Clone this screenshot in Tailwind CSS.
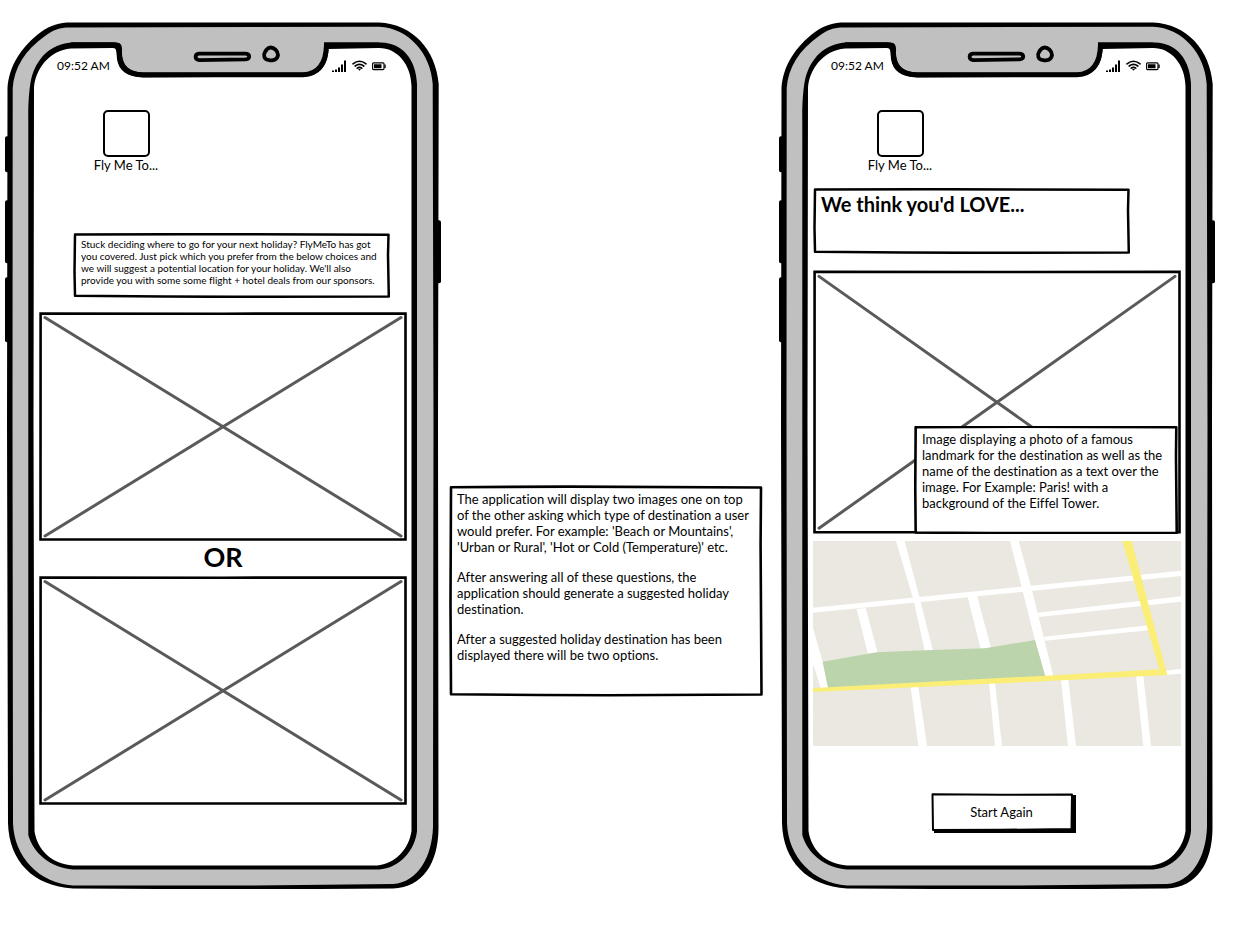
<!DOCTYPE html>
<html lang="en">
<head>
<meta charset="utf-8">
<meta name="viewport" content="width=device-width, initial-scale=1">
<title>Fly Me To... wireframe</title>
<script src="https://cdn.jsdelivr.net/npm/@tailwindcss/browser@4"></script>
</head>
<body class="bg-white text-black font-['Lato','Open_Sans',sans-serif] text-[13px] leading-[16px] [font-variant-ligatures:none]">

<!-- Shared drawings -->
<svg class="hidden" aria-hidden="true">
  <symbol id="phone" viewBox="0 0 436 866" preserveAspectRatio="none">
    <rect x="0" y="114" width="6" height="36" rx="2"/>
    <rect x="0" y="178" width="6" height="63" rx="2"/>
    <rect x="0" y="255" width="6" height="65" rx="2"/>
    <rect x="430" y="198" width="6" height="63" rx="2"/>
    <path d="M66 .5H374C408 2 431 28 433.700 62L433 400L433.500 806C433 840 418 864 388 865.500L240 866.500L68 865.500C28 863 4 838 3 800L2 400L2.500 66C4 44 16 25 36 10C46 3 54 .5 66 .5Z"/>
    <path fill="#c0c0c0" d="M62 5.500L374 4.700C404 6 426 32 427.700 62L428.500 400L428 804C427 834 413 859 388 861L240 862.500H68C34 860 9 834 8 800L7.500 400L7.700 66C9 46 20 28 40 14C48 8 54 6 62 5.500Z"/>
    <path d="M66 20.500H111C118 20.500 117 26 117 32C118 44 124 50 138 50.500H300C313 50 319 41 319 27V20.500H376C398 21 411 38 412 62V808C410 828 394 845 374 846.500H68C46 845 28 830 23.300 812V100C23 84 24 68 26 58C31 36 46 22 66 20.500Z"/>
    <path fill="#c0c0c0" d="M116 18H319V27C318 40 312 50 300 50.500H138C126 50 118 42 117.500 32C117 24 118 21 113 20.500z"/>
    <path fill="#fff" d="M66 26.500L108 26C112 26 111.500 30 112 37C114 49 122 55 138 55.500L300 54.500C316 53 323 42 323.500 27L374 26C392 26 406 42 406.500 64V808C404 826 390 841 372 842.500H68C46 841 32 826 29.500 808L28.500 400L29 66C30 48 44 28 66 26.500Z"/>
    <path fill="none" stroke="#000" stroke-width="5" stroke-linejoin="miter" d="M66 22.700H108C115 22.500 114 27 114.500 35C116 47 124 52.500 138 52.800H298C313 52 321 42 321.500 23H374"/>
    <path fill="none" stroke="#000" stroke-width="3.800" stroke-linejoin="round" d="M194 31.500H240C245.500 31.500 245.500 37 240.500 37.300L194 38C189.500 37.500 189.500 32 194 31.500Z"/>
    <path fill="none" stroke="#000" stroke-width="3.800" d="M265 25.500C269 25 273 29 273 33C272 38 268 39 264 38C259 38 258 33 260 30C261 28 262 26 265 25.500Z"/>
  </symbol>
  <symbol id="box" viewBox="0 0 316 66" preserveAspectRatio="none">
    <path fill="#fff" stroke="#000" stroke-width="2.500" stroke-linejoin="round" vector-effect="non-scaling-stroke" d="M2 1.500L120 1.200L314.500 1.800L314 22L314.800 64.500L160 64.800L90 64.600L2 63.800L1.500 40Z"/>
  </symbol>
  <symbol id="tall-box" viewBox="0 0 314 212" preserveAspectRatio="none">
    <path fill="#fff" stroke="#000" stroke-width="2.600" stroke-linejoin="round" vector-effect="non-scaling-stroke" d="M2 2.200L120 1.600L312 2.500L311.600 60L312.500 209.500L160 210.200L90 210L2 209.200L1.500 120Z"/>
  </symbol>
  <symbol id="cross" viewBox="0 0 368 228" preserveAspectRatio="none">
    <path fill="#fff" stroke="#000" stroke-width="2.600" vector-effect="non-scaling-stroke" d="M1.600 1.500L184 1.700L366.500 1.500V226.500H1.500Z"/>
    <path fill="none" stroke="#5a5a5a" stroke-width="3" stroke-linecap="round" vector-effect="non-scaling-stroke" d="M6 5.500L362 223M362 5.500L6 223"/>
  </symbol>
  <symbol id="status" viewBox="0 0 55 13">
    <path d="M1 10.500h2V12H1zM4 9.500h2V12H4zM7 7.500h2V12H7zM10 4.500h2V12h-2zM13 .5h2V12h-2z"/>
    <g fill="none" stroke="#000" stroke-width="1.700" stroke-linecap="round">
      <path d="M22 3.800Q28.500 -1.300 35 3.800"/>
      <path d="M24.200 6Q28.500 2.600 32.800 6"/>
      <path d="M26.300 8.200Q28.500 6.500 30.700 8.200"/>
    </g>
    <path d="M27 9h3L28.500 10.800z"/>
    <rect x="41.600" y="2.800" width="11.400" height="6.800" rx="1" fill="none" stroke="#000" stroke-width="1.200"/>
    <path d="M43 4.200h7.500v4H43zM53.400 4.400h1.300v3.600h-1.300z"/>
  </symbol>
</svg>

<main class="grid grid-cols-[436fr_8fr_314fr_16fr_436fr] pt-[22px] pl-[5px] pr-[34px] pb-8">

  <!-- Choice screen -->
  <section class="relative isolate col-start-1 min-w-0 flex flex-col pt-[36px] px-[34px] pb-[84px]">
    <svg class="absolute inset-0 -z-10 w-full h-full" aria-hidden="true"><use href="#phone"/></svg>
    <div class="flex items-center justify-between pl-[18px] pr-[21px]">
      <span class="text-[12px]">09:52 AM</span>
      <svg class="w-[55px] h-[13px]" role="img" aria-label="Signal, wifi and battery"><use href="#status"/></svg>
    </div>
    <div class="mt-9 ml-[53px] self-start w-[68px] flex flex-col items-center">
      <div class="w-[47px] h-[47px] border-2 border-black rounded-[5px]"></div>
      <span class="whitespace-nowrap">Fly Me To...</span>
    </div>
    <div class="relative isolate mt-[60px] ml-[34px] mr-[17px] min-h-[65px] pt-[5px] pl-2 text-[10px] leading-[12px]">
      <svg class="absolute inset-0 -z-10 w-full h-full" aria-hidden="true"><use href="#box"/></svg>
      <p class="whitespace-nowrap">Stuck deciding where to go for your next holiday? FlyMeTo has got<br>you covered. Just pick which you prefer from the below choices and<br>we will suggest a potential location for your holiday. We'll also<br>provide you with some some flight + hotel deals from our sponsors.</p>
    </div>
    <svg class="mt-[14px] w-full h-[229px]" role="img" aria-label="First image"><use href="#cross"/></svg>
    <h2 class="h-[35px] pt-[2px] text-center text-[27px] leading-[28px] font-bold">OR</h2>
    <svg class="w-full h-[229px]" role="img" aria-label="Second image"><use href="#cross"/></svg>
  </section>

  <!-- Annotation -->
  <aside class="relative isolate col-start-3 min-w-0 self-start mt-[463px] min-h-[212px] pt-[6px] pl-2 flex flex-col gap-[14px] whitespace-nowrap">
    <svg class="absolute inset-0 -z-10 w-full h-full" aria-hidden="true"><use href="#tall-box"/></svg>
    <p>The application will display two images one on top<br>of the other asking which type of destination a user<br>would prefer. For example: 'Beach or Mountains',<br>'Urban or Rural', 'Hot or Cold (Temperature)' etc.</p>
    <p>After answering all of these questions, the<br>application should generate a suggested holiday<br>destination.</p>
    <p>After a suggested holiday destination has been<br>displayed there will be two options.</p>
  </aside>

  <!-- Result screen -->
  <section class="relative isolate col-start-5 min-w-0 flex flex-col pt-[36px] px-[34px] pb-[55px]">
    <svg class="absolute inset-0 -z-10 w-full h-full" aria-hidden="true"><use href="#phone"/></svg>
    <div class="flex items-center justify-between pl-[18px] pr-[21px]">
      <span class="text-[12px]">09:52 AM</span>
      <svg class="w-[55px] h-[13px]" role="img" aria-label="Signal, wifi and battery"><use href="#status"/></svg>
    </div>
    <div class="mt-9 ml-[53px] self-start w-[68px] flex flex-col items-center">
      <div class="w-[47px] h-[47px] border-2 border-black rounded-[5px]"></div>
      <span class="whitespace-nowrap">Fly Me To...</span>
    </div>
    <div class="relative isolate mt-[15px] mr-[51px] min-h-[66px] pt-1 pl-2">
      <svg class="absolute inset-0 -z-10 w-full h-full" aria-hidden="true"><use href="#box"/></svg>
      <h1 class="text-[20px] leading-[24px] font-bold">We think you'd LOVE...</h1>
    </div>
    <div class="relative mt-4 h-[264px]">
      <svg class="w-full h-full" role="img" aria-label="Destination photo"><use href="#cross"/></svg>
      <div class="absolute isolate right-[3px] bottom-0 w-[264px] h-[108px] pt-[5px] pl-2 whitespace-nowrap">
        <svg class="absolute inset-0 -z-10 w-full h-full" aria-hidden="true"><use href="#tall-box"/></svg>
        <p>Image displaying a photo of a famous<br>landmark for the destination as well as the<br>name of the destination as a text over the<br>image. For Example: Paris! with a<br>background of the Eiffel Tower.</p>
      </div>
    </div>
    <svg class="mt-[7px] w-full h-[205px]" viewBox="39 33 1104 615" preserveAspectRatio="none" role="img" aria-label="Map">
      <path fill="#ebe8e1" d="M39 33H1143V648H39z"/>
      <g fill="#fff">
        <path d="M288 33H314L358 200L399 362H374L342 215z"/>
        <path d="M630 33H656L692 165L760 438H736L705 330z"/>
        <path d="M39 233L1143 122V138L39 248z"/>
        <path d="M712 248L1143 199V215L717 261z"/>
        <path d="M731 320L1060 284V299L735 332z"/>
        <path d="M170 237L197 234L233 368L204 372z"/>
        <path d="M503 200L531 197L573 353L542 357z"/>
        <path d="M39 295L68 395L86 474H62L39 400z"/>
        <path d="M332 470H355L381 648H355z"/>
        <path d="M567 459H585L606 648H585z"/>
        <path d="M783 449H805L828 648H804z"/>
        <path d="M1008 438H1030L1053 648H1030z"/>
        <path d="M1095 422L1143 417V431L1098 434z"/>
      </g>
      <path fill="#bbd4ac" d="M68 395L230 367L375 361L555 355L705 330L736 440L84 474z"/>
      <path fill="#faee77" d="M967 33H995L1102 435L700 455L39 486V475L84 472L735 437L1078 418z"/>
    </svg>
    <button class="relative isolate self-center mt-[47px] ml-[13px] w-[145px] h-[40px] pr-1 pb-[2px]">
      <svg class="absolute inset-0 -z-10 w-full h-full" viewBox="0 0 145 40" preserveAspectRatio="none" aria-hidden="true">
        <path d="M3 34L3 40H145V2H140z"/>
        <path fill="#fff" stroke="#000" stroke-width="2" stroke-linejoin="round" d="M1.500 1.200L70 1.800L141 1.500L140.500 36L70 36.800L2 37z"/>
      </svg>
      Start Again
    </button>
  </section>
</main>
</body>
</html>
